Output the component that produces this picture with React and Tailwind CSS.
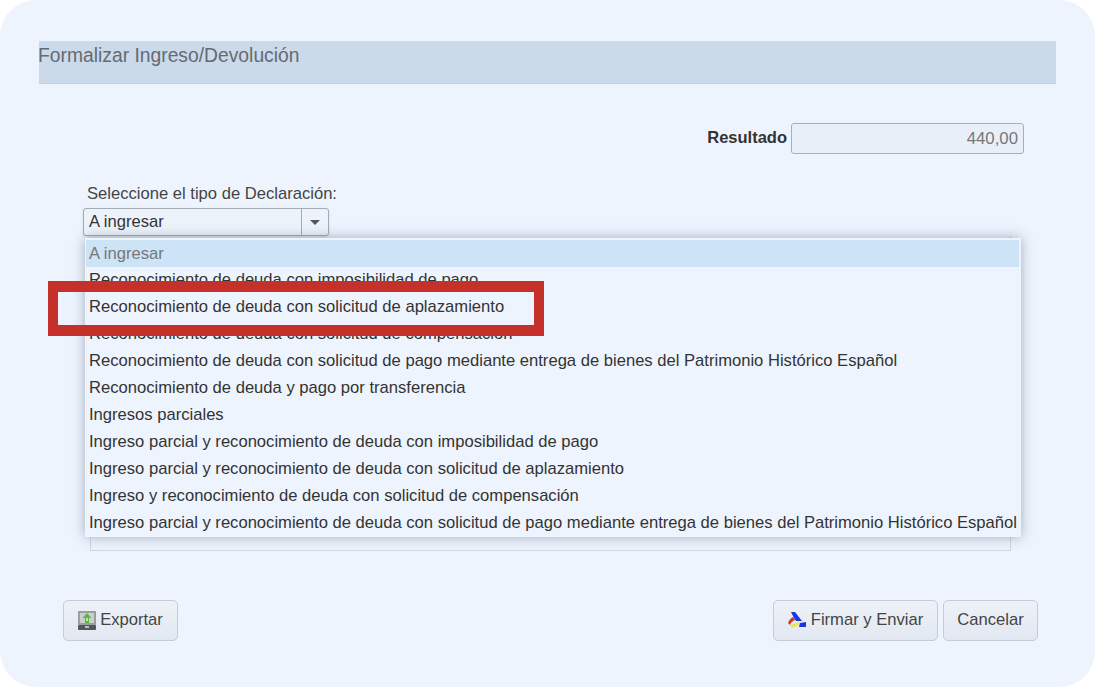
import React from 'react';

const options = [
    'A ingresar',
    'Reconocimiento de deuda con imposibilidad de pago',
    'Reconocimiento de deuda con solicitud de aplazamiento',
    'Reconocimiento de deuda con solicitud de compensación',
    'Reconocimiento de deuda con solicitud de pago mediante entrega de bienes del Patrimonio Histórico Español',
    'Reconocimiento de deuda y pago por transferencia',
    'Ingresos parciales',
    'Ingreso parcial y reconocimiento de deuda con imposibilidad de pago',
    'Ingreso parcial y reconocimiento de deuda con solicitud de aplazamiento',
    'Ingreso y reconocimiento de deuda con solicitud de compensación',
    'Ingreso parcial y reconocimiento de deuda con solicitud de pago mediante entrega de bienes del Patrimonio Histórico Español',
];

const ExportIcon = () => (
    <svg width="18" height="19" viewBox="0 0 18 19" className="shrink-0">
        <rect x="0" y="0" width="18" height="14" fill="#9a9e9d" />
        <rect x="2" y="2" width="14" height="10" fill="#c9d0cc" />
        <path d="M9 2 L13.5 7 H11 V12 H7 V7 H4.5 Z" fill="#57b947" />
        <rect x="8.4" y="7" width="1.4" height="3" fill="#e4f3c4" />
        <rect x="0" y="14" width="18" height="5" rx="1" fill="#55585b" />
        <rect x="7" y="15" width="4" height="2" fill="#b9bec0" />
    </svg>
);

const AeatLogo = () => (
    <svg width="19" height="18" viewBox="0 0 19 18" className="shrink-0">
        <path d="M3 1 H7 L14 10 H8 L6 7 Z" fill="#1f35e0" />
        <path d="M0 12 C1 9 3 7 5 6 L7 9 C5 10 3 11 2 14 Z" fill="#d2352b" />
        <path d="M2 14 L10 11 L12 13 L4 17 Z" fill="#e6e84e" />
        <path d="M12 12 L18 11 V16 H11 Z" fill="#1f35e0" />
    </svg>
);

const App = () => {
    return (
        <div className="w-[1095px] h-[687px] bg-white overflow-hidden font-['Liberation_Sans',Arial,sans-serif]">
            <div className="h-full rounded-[36px] bg-[#eef4fe] pt-[41px] px-[39px] flex flex-col">
                <div className="h-[43px] bg-[#cbdaeb] border-b border-[#c3cfdd] text-[#666a70] text-[19.3px] leading-[30px] -indent-[1px]">
                    Formalizar Ingreso/Devolución
                </div>

                <div className="flex justify-end items-center mt-[39px] pr-[32px] gap-[4px]">
                    <span className="font-bold text-[16.5px] text-[#333] mb-[3px]">Resultado</span>
                    <div className="w-[233px] h-[31px] border border-[#a9aeb5] rounded-[3px] bg-[#e9eff8] text-right text-[16.8px] leading-[29px] pr-[5px] text-[#777]">
                        440,00
                    </div>
                </div>

                <div className="relative flex-1">
                    <div className="ml-[48px] mt-[31px] text-[16.6px] leading-[18px] text-[#444]">Seleccione el tipo de Declaración:</div>
                    <div className="ml-[44px] mt-[5px] w-[246px] h-[28px] flex border border-[#a5abb3] rounded-[3px] bg-[#edf3fb] shadow-sm">
                        <div className="flex-1 border-r border-[#a5abb3] text-[16.6px] leading-[26px] pl-[5px] text-[#333]">A ingresar</div>
                        <div className="w-[26px] flex items-center justify-center">
                            <span className="w-0 h-0 border-x-[5px] border-x-transparent border-t-[5px] border-t-[#555]" />
                        </div>
                    </div>

                    {/* box under the open list */}
                    <div className="ml-[51px] mr-[45px] h-[315px] border border-[#d0d8e2] border-t-0" />

                    <div className="flex justify-between mt-[49px] pl-[24px] pr-[18px]">
                        <button className="w-[115px] h-[41px] flex items-center justify-center gap-[4px] border border-[#c5ccd6] rounded-[5px] bg-gradient-to-b from-[#eef2f8] to-[#e2e8f1] text-[16.6px] text-[#444] pb-[1px]">
                            <ExportIcon />
                            Exportar
                        </button>
                        <div className="flex gap-[5px]">
                            <button className="w-[165px] h-[41px] flex items-center justify-center gap-[4px] border border-[#c5ccd6] rounded-[5px] bg-gradient-to-b from-[#eef2f8] to-[#e2e8f1] text-[16.6px] text-[#444] pb-[1px]">
                                <AeatLogo />
                                Firmar y Enviar
                            </button>
                            <button className="w-[95px] h-[41px] border border-[#c5ccd6] rounded-[5px] bg-gradient-to-b from-[#eef2f8] to-[#e2e8f1] text-[16.6px] text-[#444]">
                                Cancelar
                            </button>
                        </div>
                    </div>

                    {/* open select list */}
                    <div className="absolute left-[46px] top-[84px] w-[936px] h-[299px] bg-[#eef4fd] pt-[2px] pl-[1px] pr-[1px] shadow-[0_0_12px_rgba(70,85,110,0.45)] overflow-hidden">
                        {options.map((opt, i) => (
                            <div
                                key={opt}
                                className={`h-[27px] pl-[3px] text-[16.6px] whitespace-nowrap ${i === 0 ? 'bg-[#cde3f6] text-[#777] mr-[1px] leading-[28px]' : 'text-[#333] leading-[26px]'}`}
                            >
                                {opt}
                            </div>
                        ))}
                    </div>

                    {/* red highlight */}
                    <div className="absolute left-[9px] top-[127px] w-[496px] h-[55px] border-[10px] border-y-[11px] border-[#c6302b]" />
                </div>
            </div>
        </div>
    );
};

export default App;
